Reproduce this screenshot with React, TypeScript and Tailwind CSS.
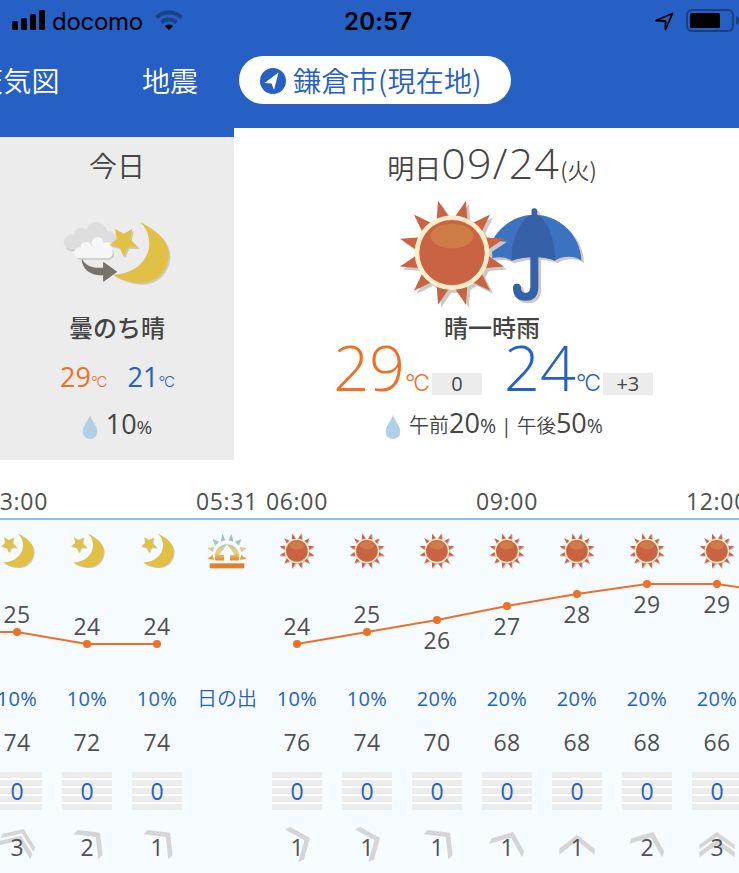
import React from "react";

const LATIN = "font-['Open_Sans','Noto_Sans_CJK_JP',sans-serif]";
const CJK = "font-['Noto_Sans_CJK_JP',sans-serif]";

function points(list: number[][]) {
  return list.map((p) => p.map((n) => n.toFixed(1)).join(",")).join(" ");
}

function polar(cx: number, cy: number, r: number, deg: number) {
  const a = (deg * Math.PI) / 180;
  return [cx + r * Math.sin(a), cy - r * Math.cos(a)];
}

function ray(cx: number, cy: number, deg: number, tip = 161.5, base = 104, spread = 11.5) {
  return points([polar(cx, cy, tip, deg), polar(cx, cy, base, deg + spread), polar(cx, cy, base, deg - spread)]);
}

const RAYS = [15, 45, 75, 105, 135, 165, 195, 225, 255, 285, 315, 345];

function SunShape() {
  return (
    <g>
      <g fill="#c9c9c9" transform="translate(9 9)">
        {RAYS.map((d) => (
          <polygon key={d} points={ray(216, 338, d)} />
        ))}
        <circle cx="216" cy="338" r="112" />
      </g>
      <g fill="#ca6244">
        {RAYS.map((d) => (
          <polygon key={d} points={ray(216, 338, d)} />
        ))}
      </g>
      <circle cx="216" cy="338" r="112" fill="#fdedc8" />
      <circle cx="216" cy="338" r="98" fill="#ca6244" />
      <ellipse cx="216" cy="288" rx="64" ry="37" fill="#d07c47" />
    </g>
  );
}

const CANOPY =
  "M463 224 C537 224 603 285 604 362 Q590 350 567 350 Q540 350 525 362 Q500 351 463 351 Q425 351 395 362 Q380 352 358 352 Q337 352 322 362 C322 285 390 224 463 224Z";

function UmbrellaShape() {
  return (
    <g>
      <g transform="translate(8 8)">
        <path d={CANOPY} fill="#c9c9c9" />
        <path d="M463 340V440Q463 470 437 470Q411 470 411 443" fill="none" stroke="#c9c9c9" strokeWidth="24" strokeLinecap="round" />
        <path d="M463 213V230" stroke="#c9c9c9" strokeWidth="17" strokeLinecap="round" />
      </g>
      <path d="M463 213V240" stroke="#3660a8" strokeWidth="17" strokeLinecap="round" />
      <path d={CANOPY} fill="#3b73c1" />
      <path d="M463 224C500 224 527 300 525 362Q500 351 463 351Q425 351 395 362C393 300 425 224 463 224Z" fill="#3660a8" />
      <path d="M463 340V440Q463 470 437 470Q411 470 411 443" fill="none" stroke="#3660a8" strokeWidth="24" strokeLinecap="round" />
    </g>
  );
}

function NightShape() {
  const star = "251,350 238,322 208,316 230,297 225,266 251,281 277,267 270,298 295,322 263,322";
  const moon = "M300 246C350 270 388 305 386 346C384 396 346 430 300 429C270 428 240 418 220 404C290 402 328 355 328 310C328 285 318 262 300 246Z";
  return (
    <g>
      <g fill="#c9c9c9" transform="translate(5 5)">
        <polygon points={star} />
        <path d={moon} />
      </g>
      <polygon points={star} fill="#e2c045" />
      <path d={moon} fill="#e2c045" />
    </g>
  );
}

function CloudShape() {
  return (
    <g>
      <g fill="#c9c9c9" transform="translate(4 5)">
        <circle cx="93" cy="307" r="22" />
        <circle cx="123" cy="284" r="21" />
        <circle cx="168" cy="274" r="29" />
        <circle cx="208" cy="294" r="18" />
        <rect x="88" y="283" width="120" height="45" />
      </g>
      <g fill="#dedede">
        <circle cx="93" cy="307" r="22" />
        <circle cx="123" cy="284" r="21" />
        <circle cx="168" cy="274" r="29" />
        <circle cx="208" cy="294" r="20" />
        <rect x="88" y="283" width="120" height="45" />
      </g>
      <g fill="#c9c9c9" transform="translate(4 4)">
        <rect x="102" y="322" width="116" height="33" rx="16" />
      </g>
      <g fill="#f6f6f6">
        <rect x="102" y="322" width="116" height="33" rx="16" />
        <circle cx="138" cy="321" r="16" />
        <circle cx="173" cy="309" r="18" />
        <circle cx="200" cy="324" r="18" />
        <rect x="130" y="318" width="70" height="30" />
      </g>
      <path d="M125 355C136 378 158 386 190 383V366L231 395L190 425V406C152 408 126 390 125 355Z" fill="#75736b" />
    </g>
  );
}

function Moon() {
  return (
    <svg width="36" height="36" viewBox="197 243 196 196">
      <NightShape />
    </svg>
  );
}

function Sun() {
  return (
    <svg width="38" height="38" viewBox="46 168 342 342">
      <SunShape />
    </svg>
  );
}

function Sunrise() {
  return (
    <svg width="40" height="36" viewBox="0 0 120 108" className="-mt-px">
      <defs>
        <linearGradient id="dawn" x1="0" y1="5" x2="0" y2="84" gradientUnits="userSpaceOnUse">
          <stop offset="0" stopColor="#94b9d8" />
          <stop offset="0.35" stopColor="#b3c7bd" />
          <stop offset="0.7" stopColor="#efd07a" />
          <stop offset="1" stopColor="#df7f2c" />
        </linearGradient>
      </defs>
      <path d="M46 3L56 22L41 26ZM74 3L79 26L64 22ZM17 18L37 26L24 39ZM103 18L96 39L83 26ZM1 45L22 42L17 58ZM119 45L103 58L98 42ZM1 78L17 65L22 80ZM119 78L98 80L103 65Z" fill="url(#dawn)" />
      <path d="M24 84A38.5 38.5 0 1 1 96 84Z" fill="url(#dawn)" stroke="#fff" strokeWidth="3" />
      <path d="M60 34L83 66H69V87H51V66H37Z" fill="#fff" />
      <rect x="8" y="91" width="104" height="15" fill="#df802d" />
    </svg>
  );
}

function Drop() {
  return (
    <svg width="16" height="26" viewBox="0 0 16 26">
      <path d="M8 1C10 7 15.3 12 15.3 17.8A7.3 7.2 0 0 1 .7 17.8C.7 12 6 7 8 1Z" fill="#b1d0e8" />
    </svg>
  );
}

type Wind = { x: number; y: number; turn: number; double?: boolean };

const W67: Wind = { x: 39, y: 474, turn: 67.5 };
const W45: Wind = { x: 39, y: 458, turn: 45 };
const W22: Wind = { x: 19, y: 456, turn: 22.5 };

function WindArrow({ wind }: { wind: Wind }) {
  return (
    <svg width="70" height="40" viewBox="-105 435 210 120" className="col-start-1 row-start-1">
      <g transform={`translate(${wind.x} ${wind.y}) rotate(${wind.turn})`} fill="#d5d5d5">
        {wind.double ? (
          <>
            <path d="M0 0L53 38V52L0 14L-53 52V38Z" />
            <path d="M0 22L53 60V76L0 38L-53 76V60Z" />
          </>
        ) : (
          <path d="M0 0L53 42V60L0 18L-53 60V42Z" />
        )}
      </g>
    </svg>
  );
}

type Hour = { time?: string; icon: "moon" | "sun" | "rise"; temp?: number; top?: number; rain: string; hum?: number; speed?: number; wind?: Wind };

const HOURS: Hour[] = [
  { time: "03:00", icon: "moon", temp: 25, top: 614, rain: "10%", hum: 74, speed: 3, wind: { x: 20, y: 447, turn: 22.5, double: true } },
  { icon: "moon", temp: 24, top: 626, rain: "10%", hum: 72, speed: 2, wind: W45 },
  { icon: "moon", temp: 24, top: 626, rain: "10%", hum: 74, speed: 1, wind: W45 },
  { time: "05:31", icon: "rise", rain: "日の出" },
  { time: "06:00", icon: "sun", temp: 24, top: 626, rain: "10%", hum: 76, speed: 1, wind: W67 },
  { icon: "sun", temp: 25, top: 614, rain: "10%", hum: 74, speed: 1, wind: W67 },
  { icon: "sun", temp: 26, top: 640, rain: "20%", hum: 70, speed: 1, wind: W45 },
  { time: "09:00", icon: "sun", temp: 27, top: 626, rain: "20%", hum: 68, speed: 1, wind: W22 },
  { icon: "sun", temp: 28, top: 614, rain: "20%", hum: 68, speed: 1, wind: { x: 0, y: 464, turn: 0 } },
  { icon: "sun", temp: 29, top: 604, rain: "20%", hum: 68, speed: 2, wind: W22 },
  { time: "12:00", icon: "sun", temp: 29, top: 604, rain: "20%", hum: 66, speed: 3, wind: { x: 0, y: 456, turn: 0, double: true } },
];

function HourColumn({ h }: { h: Hour }) {
  return (
    <div className="flex w-[70px] shrink-0 flex-col items-center text-[23px] leading-none font-normal text-[#505050]">
      <div className="flex h-[58px] items-end pb-[5px] leading-[23px] whitespace-nowrap tracking-[0.7px]">{h.time}</div>
      <div className="h-0.5 w-full bg-[#8fbfee]" />
      <div className="flex h-[62px] items-center justify-center">
        {h.icon === "moon" && <Moon />}
        {h.icon === "sun" && <Sun />}
        {h.icon === "rise" && <Sunrise />}
      </div>
      <div className="h-[98px] tracking-[0.3px]" style={{ paddingTop: h.top ? h.top - 593.5 : 0 }}>
        {h.temp}
      </div>
      <div className={`flex h-[38px] items-center text-[20px] whitespace-nowrap text-[#2660c4] ${h.icon === "rise" ? "font-[350]" : "font-normal tracking-[0.4px]"}`}>{h.rain}</div>
      <div className="flex h-[48px] items-center tracking-[0.3px]">{h.hum}</div>
      {h.wind && (
        <>
          <div className="mt-[6px] grid h-[38px] w-[50px] place-items-center">
            <div className="col-start-1 row-start-1 flex w-full flex-col gap-0.5 bg-white">
              {[0, 1, 2, 3, 4].map((i) => (
                <div key={i} className="h-1.5 bg-[#ececec]" />
              ))}
            </div>
            <div className="z-10 col-start-1 row-start-1 text-[#2660c4]">0</div>
          </div>
          <div className="mt-[15px] grid h-10 w-[70px] place-items-center">
            <WindArrow wind={h.wind} />
            <div className="z-10 col-start-1 row-start-1 pt-1">{h.speed}</div>
          </div>
        </>
      )}
    </div>
  );
}

const LINES = [
  [[-53, 632], [17, 632], [87, 644], [157, 644]],
  [[297, 644], [367, 632], [437, 620], [507, 606], [577, 594], [647, 584], [717, 584], [787, 594]],
];

function TemperatureLine() {
  return (
    <svg width="739" height="90" viewBox="0 570 739 90" className="absolute top-[110px] left-0">
      {LINES.map((line, i) => (
        <g key={i}>
          <polyline points={points(line)} fill="none" stroke="#ee7028" strokeWidth="2" />
          {line.map(([x, y]) => (
            <circle key={x} cx={x} cy={y} r="4" fill="#ee7028" />
          ))}
        </g>
      ))}
    </svg>
  );
}

function StatusBar() {
  return (
    <div className="flex h-10 items-center font-['Inter',sans-serif] text-black">
      <div className="flex w-[344px] items-center pl-3">
        <svg width="33" height="20" viewBox="0 0 33 20">
          <rect x="0" y="11" width="6" height="9" rx="1.5" />
          <rect x="9" y="8" width="6" height="12" rx="1.5" />
          <rect x="18" y="4" width="6" height="16" rx="1.5" />
          <rect x="27" y="0" width="6" height="20" rx="1.5" />
        </svg>
        <span className="mt-[3px] ml-[7px] w-[103px] text-[24px] leading-[38px] tracking-[-0.3px]">docomo</span>
        <svg width="28" height="20" viewBox="0 0 28 20">
          <g fill="none" stroke="#19428a" strokeWidth="4">
            <path d="M1.5 7.5A18 18 0 0 1 26.5 7.5" />
            <path d="M6.5 12.5A11 11 0 0 1 21.5 12.5" />
          </g>
          <path d="M9.8 16A6.3 6.3 0 0 1 18.2 16L14 20Z" />
        </svg>
      </div>
      <span className="mt-[3px] w-[310px] text-[24px] leading-[38px] font-semibold tracking-[0.2px]">20:57</span>
      <svg width="85" height="24" viewBox="0 0 85 24" className="shrink-0">
        <path d="M2 12.5L18.5 5.5L11.5 21.5V13Z" fill="none" stroke="#000" strokeWidth="1.8" strokeLinejoin="round" />
        <rect x="33" y="2" width="46" height="21" rx="5" fill="none" stroke="#193f80" strokeWidth="2" />
        <rect x="36" y="5" width="30" height="15" rx="1.5" />
        <path d="M82 8Q85 9 85 12.5Q85 16 82 17Z" fill="#193f80" />
      </svg>
    </div>
  );
}

function Celsius({ size }: { size: string }) {
  return <span className={`font-['Inter',sans-serif] font-light ${size}`}>°C</span>;
}

export default function App() {
  return (
    <div className={`flex h-[873px] w-[739px] flex-col overflow-hidden bg-white text-[#444] ${LATIN}`}>
      <header className="h-[128px] shrink-0 bg-[#2660c4]">
        <StatusBar />
        <nav className={`mt-4 flex h-12 items-center text-[28px] leading-none font-[350] text-white ${CJK}`}>
          <span className="-ml-[25px] w-[167px] tracking-[0.2px]">天気図</span>
          <span className="w-[97px]">地震</span>
          <span className="flex h-12 w-[272px] items-center rounded-full bg-white pl-[21px] tracking-[0.3px] whitespace-nowrap text-[#2660c4]">
            <svg width="26" height="26" viewBox="0 0 26 26" className="mt-0.5 mr-[7px] shrink-0">
              <circle cx="13" cy="13" r="13" fill="#2660c4" />
              <path d="M18.5 4.5L14 22L11.5 15.5L4.5 15Z" fill="#fff" />
            </svg>
            鎌倉市(現在地)
          </span>
        </nav>
      </header>

      <section className="flex h-[332px] shrink-0">
        <div className="flex w-[234px] shrink-0 flex-col items-center border-t-[9px] border-[#2660c4] bg-[#ececec]">
          <div className="mt-[15px] text-[28px] leading-[28px] font-[350]">今日</div>
          <svg width="112" height="67" viewBox="63 237 336 201" className="mt-[39px]">
            <CloudShape />
            <NightShape />
            <path d="M190 366L231 395L190 425Z" fill="#75736b" />
          </svg>
          <div className="mt-[30px] text-[24px] leading-[24px] font-medium">曇のち晴</div>
          <div className="mt-[22px] flex h-[30px] items-baseline text-[27px] leading-[30px] font-normal">
            <span className="text-[#ee7028]">29<Celsius size="text-[15px] tracking-[-1px]" /></span>
            <span className="ml-[21px] text-[#2660c4]">21<Celsius size="text-[15px] tracking-[-1px]" /></span>
          </div>
          <div className="mt-[18px] flex h-[30px] items-center text-[27px] leading-[30px] font-normal">
            <span className="mt-1 flex"><Drop /></span>
            <span className="ml-2">10<span className="text-[19px]">%</span></span>
          </div>
        </div>

        <div className="flex w-[516px] shrink-0 flex-col items-center">
          <div className="mt-[10px] flex h-[50px] items-baseline text-[27px] leading-[50px] font-[350] whitespace-nowrap">
            明日<span className="text-[43px] font-light tracking-[1.2px]">09/24</span><span className={`text-[22px] ${CJK}`}>(火)</span>
          </div>
          <svg width="192" height="114" viewBox="48 168 576 342" className="mt-[8px]">
            <UmbrellaShape />
            <SunShape />
          </svg>
          <div className="mt-[6px] text-[24px] leading-[24px] font-medium">晴一時雨</div>
          <div className="-mt-[3px] ml-0.5 flex h-[60px] items-baseline text-[63px] leading-[60px] font-light">
            <span className="text-[#ee7028]">29<Celsius size="text-[23px] tracking-[-2px]" /></span>
            <span className="ml-[4px] h-[22px] w-[50px] bg-[#ececec] text-center text-[20px] leading-[22px] font-normal">0</span>
            <span className="ml-[22px] text-[#2660c4]">24<Celsius size="text-[23px] tracking-[-2px]" /></span>
            <span className="ml-[4px] h-[22px] w-[50px] bg-[#ececec] text-center text-[20px] leading-[22px] font-normal">+3</span>
          </div>
          <div className="mt-[8px] ml-1 flex items-center text-[27px] leading-[36px] font-normal whitespace-nowrap">
            <span className="mt-1 flex"><Drop /></span>
            <span className="ml-2"><span className="text-[20px] font-[350]">午前</span>20<span className="text-[19.5px]">% | <span className="font-[350]">午後</span></span>50<span className="text-[19.5px]">%</span></span>
          </div>
        </div>
      </section>

      <section className="relative h-[413px] shrink-0 overflow-hidden bg-linear-to-b from-white from-[58px] to-[#f6fbff] to-[58px]">
        <TemperatureLine />
        <div className="-ml-[18px] flex">
          {HOURS.map((h, i) => (
            <HourColumn key={i} h={h} />
          ))}
        </div>
      </section>
    </div>
  );
}
